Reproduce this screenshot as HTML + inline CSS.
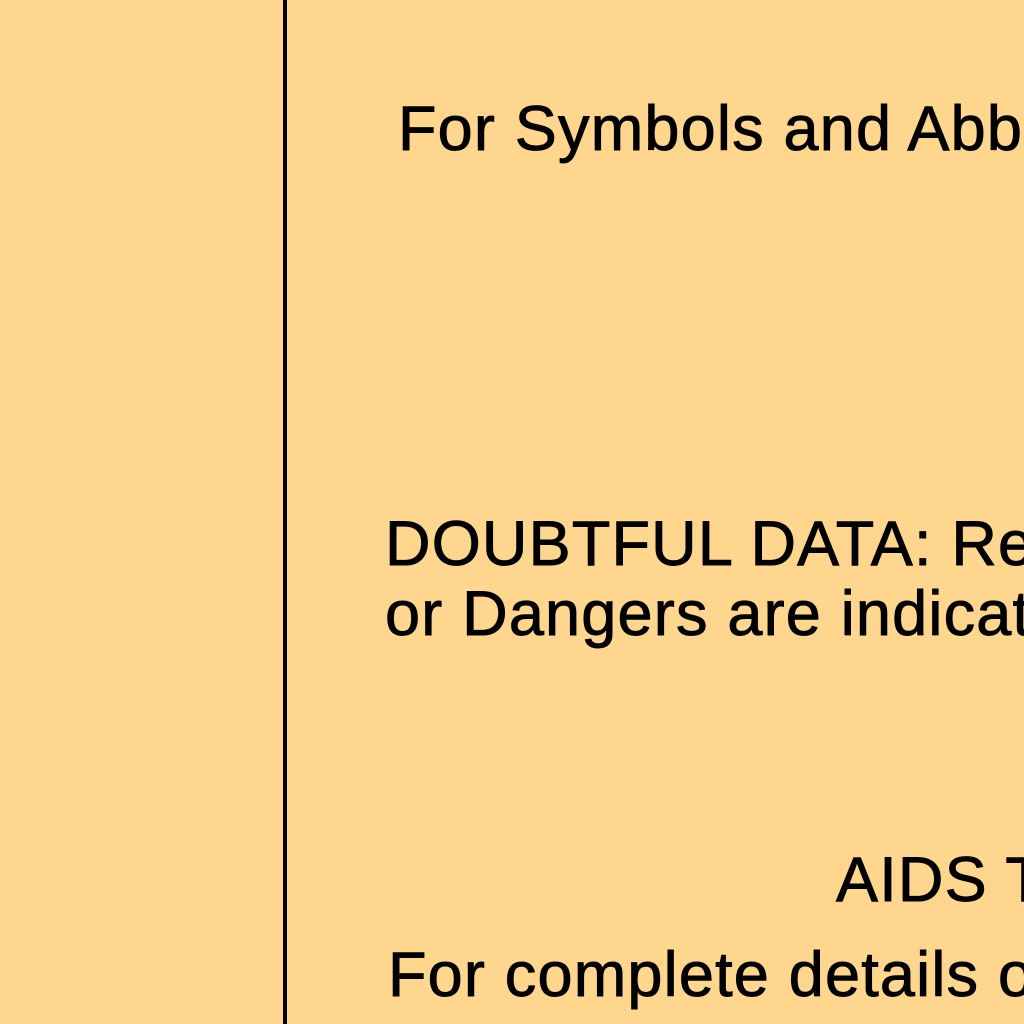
<!DOCTYPE html>
<html><head><style>
html,body{margin:0;padding:0;}
body{width:1024px;height:1024px;background:#FED68E;position:relative;overflow:hidden;font-family:"Liberation Sans",sans-serif;color:#000;}
.l{position:absolute;left:283px;top:0;width:4px;height:1024px;background:#000;}
.w{position:absolute;left:0;top:0;width:1024px;height:1024px;overflow:hidden;}
.t{position:absolute;font-size:63px;line-height:63px;white-space:nowrap;letter-spacing:1.2px;-webkit-text-stroke:0.9px #000;}
</style></head><body>
<div class="l"></div>
<div class="w">
<div class="t" style="left:398px;top:98px">For Symbols and Abb</div>
<div class="t" style="left:385px;top:513px">DOUBTFUL DATA: Re</div>
<div class="t" style="left:385px;top:583px">or Dangers are indicat</div>
<div class="t" style="left:836px;top:849px">AIDS T</div>
<div class="t" style="left:388px;top:944px">For complete details o</div>
</div>
</body></html>
